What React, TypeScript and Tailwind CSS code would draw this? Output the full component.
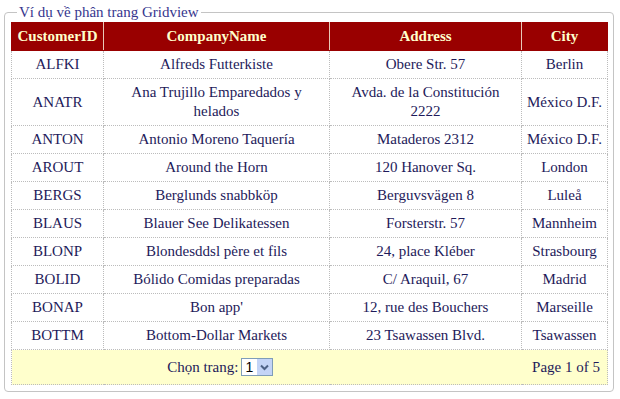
const rows: [string, string, string, string][] = [
  ['ALFKI', 'Alfreds Futterkiste', 'Obere Str. 57', 'Berlin'],
  ['ANATR', 'Ana Trujillo Emparedados y helados', 'Avda. de la Constitución\n2222', 'México D.F.'],
  ['ANTON', 'Antonio Moreno Taquería', 'Mataderos 2312', 'México D.F.'],
  ['AROUT', 'Around the Horn', '120 Hanover Sq.', 'London'],
  ['BERGS', 'Berglunds snabbköp', 'Berguvsvägen 8', 'Luleå'],
  ['BLAUS', 'Blauer See Delikatessen', 'Forsterstr. 57', 'Mannheim'],
  ['BLONP', 'Blondesddsl père et fils', '24, place Kléber', 'Strasbourg'],
  ['BOLID', 'Bólido Comidas preparadas', 'C/ Araquil, 67', 'Madrid'],
  ['BONAP', "Bon app'", '12, rue des Bouchers', 'Marseille'],
  ['BOTTM', 'Bottom-Dollar Markets', '23 Tsawassen Blvd.', 'Tsawassen'],
]

const headers = ['CustomerID', 'CompanyName', 'Address', 'City']

export default function App() {
  return (
    <div className="w-[620px] h-[399px] bg-white pt-[3px] pl-[4px]" style={{ fontFamily: "'Liberation Serif', 'Times New Roman', serif" }}>
      <fieldset className="w-[608px] border border-[#c4c4c4] rounded-[4px] pl-[6px] pr-[5px] pb-[6px]">
        <legend className="ml-[6px] px-[2px] text-[15px] leading-[19px] text-[#36368e]">Ví dụ về phân trang Gridview</legend>

        <table className="w-[596px] table-fixed border-collapse text-[15px] leading-[19px] text-[#1e1a5a]">
          <colgroup>
            <col className="w-[92px]" />
            <col className="w-[226px]" />
            <col className="w-[192px]" />
            <col className="w-[86px]" />
          </colgroup>
          <thead>
            <tr className="bg-[#990000] text-[#ffffcc] font-bold">
              {headers.map(h => (
                <th key={h} className="px-[3px] py-[4px] border border-[#e8c8b8] border-y-[#990000] first:border-l-[#990000] last:border-r-[#990000]">
                  {h}
                </th>
              ))}
            </tr>
          </thead>
          <tbody>
            {rows.map(r => (
              <tr key={r[0]} className="bg-white">
                {r.map((c, i) => (
                  <td key={i} className="px-[4px] py-[4px] text-center whitespace-pre-line border border-dotted border-[#bcbcbc] last:whitespace-nowrap last:px-[2px]">
                    {c}
                  </td>
                ))}
              </tr>
            ))}
            <tr className="bg-[#ffffcc]">
              <td colSpan={4} className="p-0 border border-dotted border-[#bcbcbc]">
                <div className="flex items-center h-[34px]">
                  <div className="w-[70%] flex items-center justify-center gap-[3px]">
                    <span>Chọn trang:</span>
                    <div className="flex items-center h-[18px] w-[32px] border border-[#7f9db9] bg-white">
                      <span className="flex-1 pl-[3px] text-[14px] leading-[16px] text-black" style={{ fontFamily: "'Liberation Sans', Arial, sans-serif" }}>1</span>
                      <span className="w-[15px] h-[16px] bg-[#c4d4f6] flex items-center justify-center">
                        <svg width="9" height="7" viewBox="0 0 9 7">
                          <polyline points="1,1.5 4.5,5 8,1.5" fill="none" stroke="#4d6185" strokeWidth="2" />
                        </svg>
                      </span>
                    </div>
                  </div>
                  <div className="flex-1 text-right pr-[7px]">Page 1 of 5</div>
                </div>
              </td>
            </tr>
          </tbody>
        </table>
      </fieldset>
    </div>
  )
}
